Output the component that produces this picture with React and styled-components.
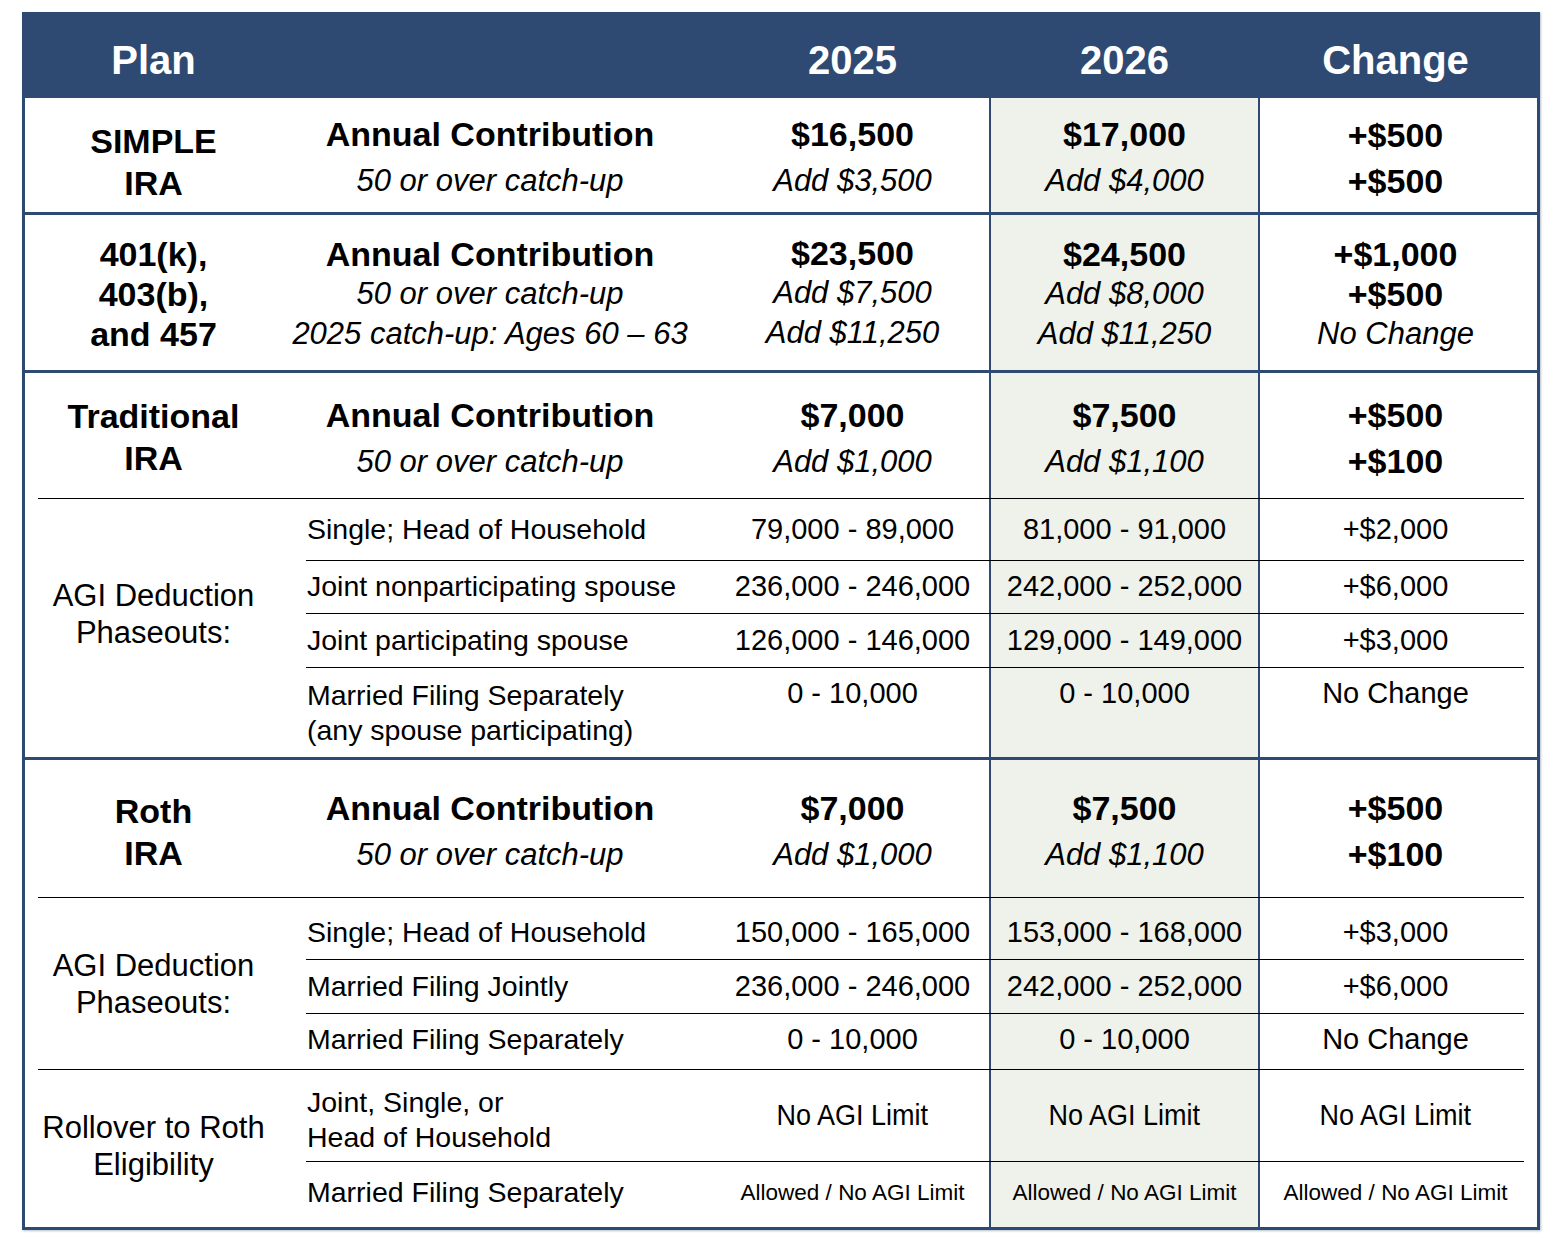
import styled, { createGlobalStyle } from 'styled-components';

const navy = '#2f4a72';
const sage = '#eff2ea';
const cols = '257px 434px 273px 271px 1fr';
const subCols = '434px 273px 271px 1fr';

const GlobalStyle = createGlobalStyle`
  *, *::before, *::after { box-sizing: border-box; }
  html, body { margin: 0; background: #fff; }
  body {
    font-family: 'Liberation Sans', Arial, Helvetica, sans-serif;
    color: #000;
  }
`;

const Page = styled.div`
  padding: 12px 0 20px 22px;
`;

const Table = styled.div`
  width: 1518px;
  border: 3px solid ${navy};
  box-shadow: 1px 1px 2px rgba(47, 74, 114, 0.35);
`;

const Header = styled.div`
  display: grid;
  grid-template-columns: ${cols};
  align-items: center;
  height: 83px;
  padding-top: 7px;
  background: ${navy};
  color: #fff;
  font-size: 40px;
  font-weight: 700;
`;

const HeadCell = styled.div`
  text-align: center;
  padding-right: ${(p) => p.$pr || 0}px;
`;

const Section = styled.div`
  border-bottom: 3px solid ${navy};
  &:last-child {
    border-bottom: 0;
  }
`;

const MainRow = styled.div`
  display: grid;
  grid-template-columns: ${cols};
  height: ${(p) => p.$h}px;
`;

const Cell = styled.div`
  display: flex;
  flex-direction: column;
  justify-content: center;
  align-items: center;
  text-align: center;
  line-height: ${(p) => p.$lh || 40}px;
  gap: ${(p) => p.$gap || 0}px;
  padding-top: ${(p) => p.$pt ?? 5}px;
  padding-right: ${(p) => p.$pr || 0}px;
  white-space: nowrap;
`;

const YearCell = styled(Cell)`
  background: ${sage};
  border-left: 2px solid ${navy};
  border-right: 2px solid ${navy};
`;

const Bold = styled.div`
  font-size: 34px;
  font-weight: 700;
`;

const Note = styled.div`
  font-size: 31px;
  font-style: italic;
`;

const Rule = styled.div`
  height: 1px;
  background: #000;
  margin: 0 13px 0 ${(p) => p.$left ?? 13}px;
`;

const Group = styled.div`
  display: grid;
  grid-template-columns: 257px 1fr;
`;

const GroupLabel = styled.div`
  display: flex;
  flex-direction: column;
  justify-content: center;
  align-items: center;
  text-align: center;
  font-size: 31px;
  line-height: 37px;
  padding-bottom: ${(p) => p.$pb || 0}px;
`;

const SubRow = styled.div`
  display: grid;
  grid-template-columns: ${subCols};
  height: ${(p) => p.$h}px;
`;

// shift > 0 pushes the text down, shift < 0 pulls it up
const shiftPad = (s = 0) => `
  padding-top: ${Math.max(s, 0) * 2}px;
  padding-bottom: ${Math.max(-s, 0) * 2}px;
`;

const SubLabel = styled.div`
  display: flex;
  flex-direction: column;
  justify-content: center;
  padding-left: 25px;
  font-size: 28.5px;
  line-height: 35px;
  white-space: nowrap;
  ${(p) => shiftPad(p.$shift)}
`;

const SubValue = styled.div`
  display: flex;
  justify-content: center;
  align-items: ${(p) => (p.$top ? 'flex-start' : 'center')};
  ${(p) => (p.$top ? 'padding-top: 8px;' : shiftPad(p.$shift))}
  padding-right: ${(p) => p.$pr || 0}px;
  font-size: ${(p) => p.$size || 29}px;
  line-height: 35px;
  white-space: nowrap;
`;

const SubYear = styled(SubValue)`
  background: ${sage};
  border-left: 2px solid ${navy};
  border-right: 2px solid ${navy};
`;

const Narrow = styled.span`
  display: inline-block;
  font-size: 30px;
  transform: scaleX(0.9);
`;

const ContribRow = ({ h, plan, planPt, y25, y26, change, tall }) => (
  <MainRow $h={h}>
    <Cell $lh={tall ? 40 : 42} $pt={planPt ?? (tall ? 3 : 6)}>
      {plan.map((t) => (
        <Bold key={t}>{t}</Bold>
      ))}
    </Cell>
    <Cell $gap={tall ? 0 : 7} $pt={tall ? 3 : 5} $pr={18}>
      <Bold>Annual Contribution</Bold>
      <Note>50 or over catch-up</Note>
      {tall && <Note>2025 catch-up: Ages 60 – 63</Note>}
    </Cell>
    <Cell $gap={tall ? 0 : 7} $pt={tall ? 1 : 5}>
      <Bold>{y25[0]}</Bold>
      {y25.slice(1).map((t) => (
        <Note key={t}>{t}</Note>
      ))}
    </Cell>
    <YearCell $gap={tall ? 0 : 7} $pt={tall ? 3 : 5}>
      <Bold>{y26[0]}</Bold>
      {y26.slice(1).map((t) => (
        <Note key={t}>{t}</Note>
      ))}
    </YearCell>
    <Cell $gap={tall ? 0 : 6} $pt={tall ? 3 : 5} $pr={6}>
      {change.map((t) =>
        t === 'No Change' ? <Note key={t}>{t}</Note> : <Bold key={t}>{t}</Bold>
      )}
    </Cell>
  </MainRow>
);

const Phaseout = ({ h, label, y25, y26, change, top, size, shift, labelShift }) => (
  <SubRow $h={h}>
    <SubLabel $shift={labelShift ?? shift}>
      {label.map((t) => (
        <span key={t}>{t}</span>
      ))}
    </SubLabel>
    <SubValue $top={top} $size={size} $shift={shift}>{y25}</SubValue>
    <SubYear $top={top} $size={size} $shift={shift}>{y26}</SubYear>
    <SubValue $top={top} $size={size} $shift={shift} $pr={6}>{change}</SubValue>
  </SubRow>
);

const PhaseoutList = ({ rows }) => (
  <div>
    {rows.map((r, i) => (
      <div key={r.label.join()}>
        {i > 0 && <Rule $left={24} />}
        <Phaseout {...r} />
      </div>
    ))}
  </div>
);

const traditionalRows = [
  { h: 61, label: ['Single; Head of Household'], y25: '79,000 - 89,000', y26: '81,000 - 91,000', change: '+$2,000' },
  { h: 52, label: ['Joint nonparticipating spouse'], y25: '236,000 - 246,000', y26: '242,000 - 252,000', change: '+$6,000', shift: -1 },
  { h: 53, label: ['Joint participating spouse'], y25: '126,000 - 146,000', y26: '129,000 - 149,000', change: '+$3,000' },
  {
    h: 89,
    label: ['Married Filing Separately', '(any spouse participating)'],
    y25: '0 - 10,000',
    y26: '0 - 10,000',
    change: 'No Change',
    top: true,
  },
];

const rothRows = [
  { h: 61, label: ['Single; Head of Household'], y25: '150,000 - 165,000', y26: '153,000 - 168,000', change: '+$3,000', shift: 4 },
  { h: 53, label: ['Married Filing Jointly'], y25: '236,000 - 246,000', y26: '242,000 - 252,000', change: '+$6,000' },
  { h: 55, label: ['Married Filing Separately'], y25: '0 - 10,000', y26: '0 - 10,000', change: 'No Change', shift: -2 },
];

const noLimit = <Narrow>No AGI Limit</Narrow>;

const rolloverRows = [
  {
    h: 91,
    label: ['Joint, Single, or', 'Head of Household'],
    y25: noLimit,
    y26: noLimit,
    change: noLimit,
    labelShift: 4,
    shift: -1,
  },
  {
    h: 65,
    label: ['Married Filing Separately'],
    y25: 'Allowed / No AGI Limit',
    y26: 'Allowed / No AGI Limit',
    change: 'Allowed / No AGI Limit',
    size: 22.5,
    shift: -2,
  },
];

const App = () => (
  <Page>
    <GlobalStyle />
    <Table>
      <Header>
        <HeadCell>Plan</HeadCell>
        <HeadCell />
        <HeadCell>2025</HeadCell>
        <HeadCell>2026</HeadCell>
        <HeadCell $pr={6}>Change</HeadCell>
      </Header>

      <Section>
        <ContribRow
          h={114}
          plan={['SIMPLE', 'IRA']}
          planPt={14}
          y25={['$16,500', 'Add $3,500']}
          y26={['$17,000', 'Add $4,000']}
          change={['+$500', '+$500 ']}
        />
      </Section>

      <Section>
        <ContribRow
          tall
          h={155}
          plan={['401(k),', '403(b),', 'and 457']}
          y25={['$23,500', 'Add $7,500', 'Add $11,250']}
          y26={['$24,500', 'Add $8,000', 'Add $11,250']}
          change={['+$1,000', '+$500', 'No Change']}
        />
      </Section>

      <Section>
        <ContribRow
          h={125}
          plan={['Traditional', 'IRA']}
          planPt={2}
          y25={['$7,000', 'Add $1,000']}
          y26={['$7,500', 'Add $1,100']}
          change={['+$500', '+$100']}
        />
        <Rule />
        <Group>
          <GroupLabel $pb={28}>
            <span>AGI Deduction</span>
            <span>Phaseouts:</span>
          </GroupLabel>
          <PhaseoutList rows={traditionalRows} />
        </Group>
      </Section>

      <Section>
        <ContribRow
          h={137}
          plan={['Roth', 'IRA']}
          y25={['$7,000', 'Add $1,000']}
          y26={['$7,500', 'Add $1,100']}
          change={['+$500', '+$100']}
        />
        <Rule />
        <Group>
          <GroupLabel>
            <span>AGI Deduction</span>
            <span>Phaseouts:</span>
          </GroupLabel>
          <PhaseoutList rows={rothRows} />
        </Group>
        <Rule />
        <Group>
          <GroupLabel $pb={6}>
            <span>Rollover to Roth</span>
            <span>Eligibility</span>
          </GroupLabel>
          <PhaseoutList rows={rolloverRows} />
        </Group>
      </Section>
    </Table>
  </Page>
);

export default App;
